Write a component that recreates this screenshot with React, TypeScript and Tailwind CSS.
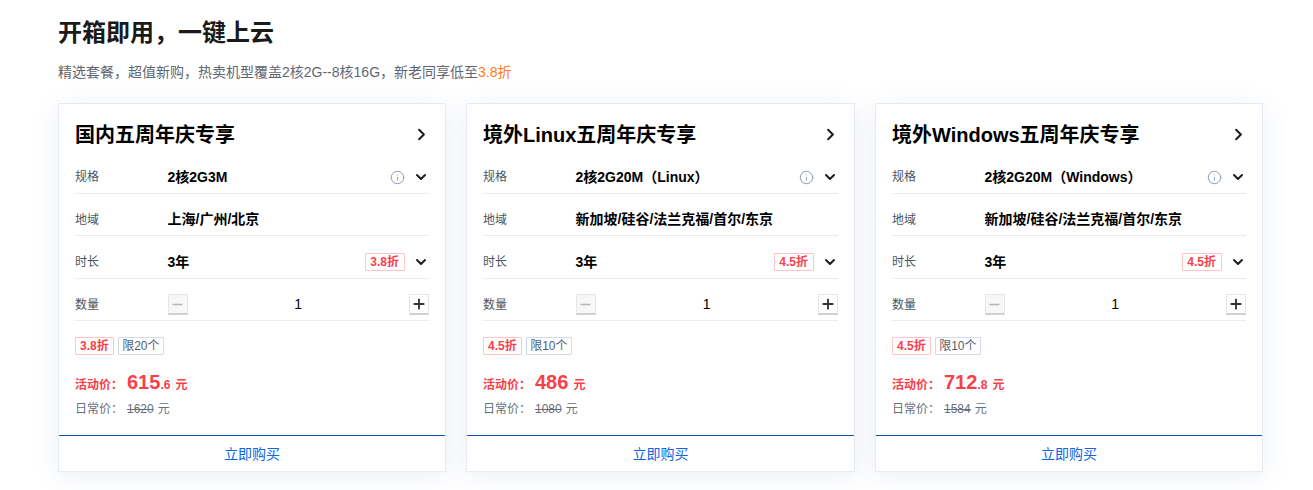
import { ChevronDown, ChevronRight, Info, Minus, Plus } from "lucide-react"

const FONT = "font-['Liberation_Sans','Noto_Sans_CJK_SC',sans-serif]"

type Plan = {
  title: string
  spec: string
  region: string
  discount: string
  limit: string
  price: string
  cents?: string
  regular: string
}

const PLANS: Plan[] = [
  {
    title: "国内五周年庆专享",
    spec: "2核2G3M",
    region: "上海/广州/北京",
    discount: "3.8折",
    limit: "限20个",
    price: "615",
    cents: ".6",
    regular: "1620",
  },
  {
    title: "境外Linux五周年庆专享",
    spec: "2核2G20M（Linux）",
    region: "新加坡/硅谷/法兰克福/首尔/东京",
    discount: "4.5折",
    limit: "限10个",
    price: "486",
    regular: "1080",
  },
  {
    title: "境外Windows五周年庆专享",
    spec: "2核2G20M（Windows）",
    region: "新加坡/硅谷/法兰克福/首尔/东京",
    discount: "4.5折",
    limit: "限10个",
    price: "712",
    cents: ".8",
    regular: "1584",
  },
]

function Row({ label, children }: { label: string; children: React.ReactNode }) {
  return (
    <div className="flex h-[42.5px] items-center border-b border-[#e8ebf2] pt-[11px]">
      <span className="w-[92.5px] shrink-0 text-[12px] text-[#4b5563]">{label}</span>
      {children}
    </div>
  )
}

function DiscountTag({ text }: { text: string }) {
  return (
    <span className="flex h-[18px] items-center rounded-[1px] border border-[#ffc4c4] px-[4px] text-[12px] font-bold text-[#f9404a]">
      {text}
    </span>
  )
}

function Card({ plan }: { plan: Plan }) {
  return (
    <div className="flex h-[369px] flex-col border border-[#e8ebf3] bg-white shadow-[0_4px_24px_rgba(55,99,170,0.1)]">
      <div className="flex-1 px-[16px]">
        <div className="flex h-[47px] items-start justify-between pt-[17px]">
          <h3 className="text-[20px] font-bold leading-[28px] text-black">{plan.title}</h3>
          <ChevronRight className="-mr-[2px] mt-[4px] size-[19px] text-[#1f1f1f]" strokeWidth={2.6} />
        </div>
        <div className="flex flex-col">
          <Row label="规格">
            <span className="flex-1 text-[14px] font-bold text-black">{plan.spec}</span>
            <Info className="mr-[8px] size-[15px] text-[#8f9db8]" strokeWidth={1.6} />
            <ChevronDown className="size-[16px] text-[#1f1f1f]" strokeWidth={3} />
          </Row>
          <Row label="地域">
            <span className="text-[14px] font-bold text-black">{plan.region}</span>
          </Row>
          <Row label="时长">
            <span className="flex-1 text-[14px] font-bold text-black">3年</span>
            <span className="mr-[8.5px]">
              <span className="flex h-[18px] items-center rounded-[1px] border border-[#ffc4c4] px-[4.5px] text-[12px] font-bold text-[#f9404a]">
                {plan.discount}
              </span>
            </span>
            <ChevronDown className="size-[16px] text-[#1f1f1f]" strokeWidth={3} />
          </Row>
          <Row label="数量">
            <button className="flex h-[21px] w-[20px] items-center justify-center rounded-[1px] border border-[#e6e6e6] border-b-2 border-b-[#d0d0d0] bg-[#f7f7f7]">
              <Minus className="size-[15px] text-[#b5b5b5]" strokeWidth={2.5} />
            </button>
            <span className="flex-1 text-center text-[14px] text-black">1</span>
            <button className="flex h-[21px] w-[20px] items-center justify-center rounded-[1px] border border-[#e6e6e6] border-b-2 border-b-[#d0d0d0] bg-white">
              <Plus className="size-[16px] text-[#333333]" strokeWidth={2.8} />
            </button>
          </Row>
        </div>
        <div className="mt-[15.5px] flex gap-[4px]">
          <DiscountTag text={plan.discount} />
          <span className="flex h-[18px] items-center rounded-[1px] border border-[#d3d9e6] px-[3.5px] text-[12px] text-[#4f5d72]">
            {plan.limit}
          </span>
        </div>
        <div className="mt-[12px] flex h-[22px] items-baseline text-[#f9404a]">
          <span className="w-[52px] text-[12px] font-bold">活动价：</span>
          <span className="text-[20px] font-bold">{plan.price}</span>
          {plan.cents && <span className="text-[12px] font-bold">{plan.cents}</span>}
          <span className="ml-[5px] text-[12px] font-bold">元</span>
        </div>
        <div className="mt-[11px] flex items-baseline text-[12px] text-[#666f7d]">
          <span className="w-[52px]">日常价：</span>
          <span className="line-through">{plan.regular}</span>
          <span className="ml-[4px]">元</span>
        </div>
      </div>
      <a className="flex h-[36px] items-center justify-center border-t border-[#1550b8] pt-[1px] text-[14px] text-[#0a66e8]">
        立即购买
      </a>
    </div>
  )
}

export default function App() {
  return (
    <div className={`${FONT} h-[490px] overflow-hidden bg-white pl-[58px] pt-[17px]`}>
      <h2 className="text-[24px] font-bold leading-[32px] text-[#1a1a1a]">开箱即用，一键上云</h2>
      <p className="mt-[12px] text-[14px] leading-[22px] text-[#5f6672]">
        精选套餐，超值新购，热卖机型覆盖2核2G--8核16G，新老同享低至
        <span className="text-[#ff7a1a]">3.8折</span>
      </p>
      <div className="mt-[20px] grid w-[1205px] grid-cols-[388px_389px_388px] gap-[20px]">
        {PLANS.map((plan) => (
          <Card key={plan.title} plan={plan} />
        ))}
      </div>
    </div>
  )
}
